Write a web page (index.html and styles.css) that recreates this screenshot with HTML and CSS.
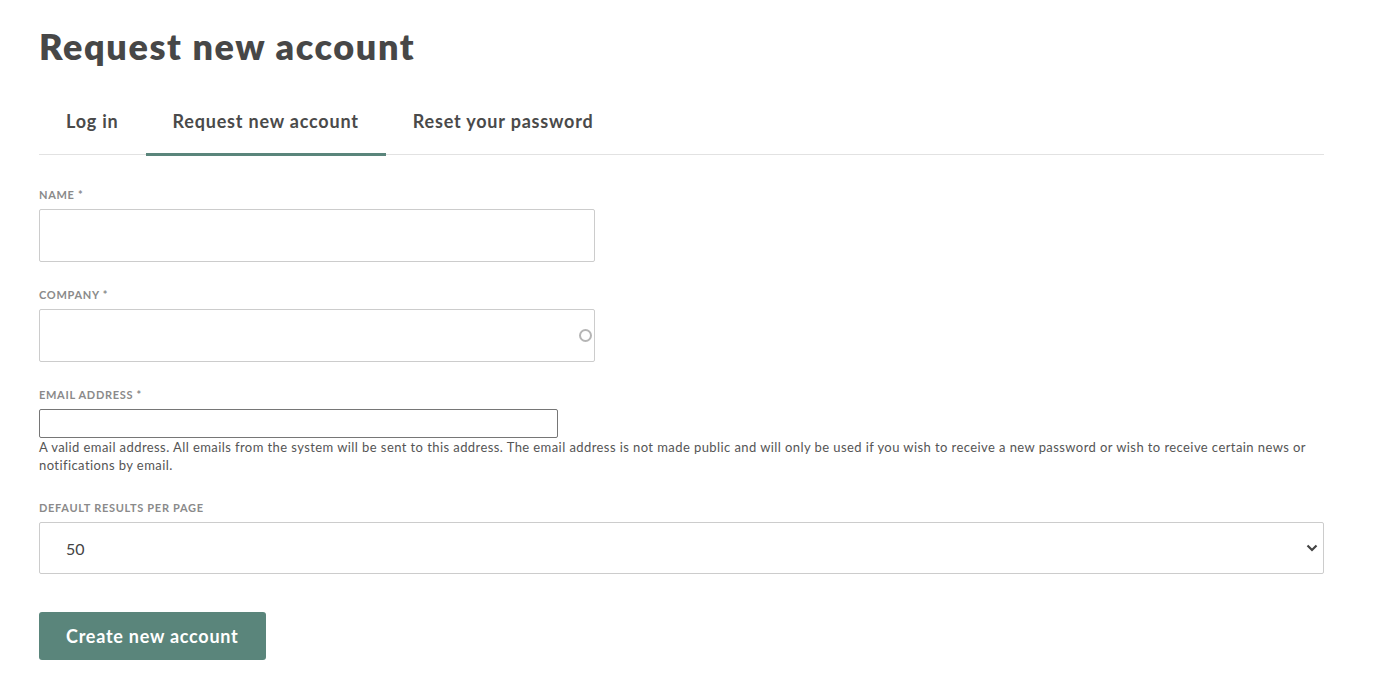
FILE: index.html
```html
<!DOCTYPE html>
<html lang="en">

<head>
  <meta charset="UTF-8" />
  <meta name="viewport" content="width=device-width, initial-scale=1.0" />
  <title>Request new account</title>
  <link rel="stylesheet" href="styles.css">
</head>

<body>
  <main class="page">
    <h1 class="page-title">Request new account</h1>

    <!-- Tabs -->
    <nav class="tabs">
      <a class="tab" href="#">Log in</a>
      <a class="tab is-active" href="#">Request new account</a>
      <a class="tab" href="#">Reset your password</a>
    </nav>

    <form class="register-form">
      <div class="form-item">
        <label for="name">Name *</label>
        <input type="text" id="name" class="text-input" />
      </div>

      <div class="form-item">
        <label for="company">Company *</label>
        <div class="autocomplete">
          <input type="text" id="company" class="text-input" />
          <span class="throbber"></span>
        </div>
      </div>

      <div class="form-item form-item-mail">
        <label for="mail">Email address *</label>
        <input type="email" id="mail" class="email-input" />
        <div class="description">A valid email address. All emails from the system will be sent to this address. The email address is not made public and will only be used if you wish to receive a new password or wish to receive certain news or notifications by email.</div>
      </div>

      <div class="form-item">
        <label for="per-page">Default results per page</label>
        <div class="select-wrap">
          <select id="per-page" class="select-input">
            <option>10</option>
            <option>25</option>
            <option selected>50</option>
            <option>100</option>
          </select>
          <svg class="chevron" width="12" height="8" viewBox="0 0 12 8"><path d="M1.5 1.5 6 6l4.5-4.5" fill="none" stroke="#444" stroke-width="2.2"/></svg>
        </div>
      </div>

      <button type="submit" class="btn-submit">Create new account</button>
    </form>
  </main>
</body>

</html>
```

FILE: styles.css
```css
body {
  font-family: 'Lato', 'Noto Sans', sans-serif;
  margin: 0;
  padding: 0;
  color: #4a4a4a;
  background: #fff;
}

.page {
  width: 1285px;
  padding: 24px 0 30px 39px;
}

.page-title {
  margin: 0;
  font-size: 36px;
  font-weight: 800;
  line-height: 44px;
  letter-spacing: 1.6px;
  color: #474747;
}

.tabs {
  display: flex;
  margin-top: 33px;
  border-bottom: 1px solid #e2e2e2;
}

.tab {
  display: block;
  padding: 0 27px;
  height: 55px;
  line-height: 40px;
  font-size: 18px;
  font-weight: 700;
  color: #4a4a4a;
  text-decoration: none;
  letter-spacing: 0.8px;
  border-bottom: 3px solid transparent;
  margin-bottom: -2px;
  box-sizing: border-box;
}

.tab.is-active {
  border-bottom-color: #5a857b;
}

.register-form {
  padding-top: 32px;
}

.form-item {
  margin-bottom: 25px;
}

label {
  display: block;
  font-size: 11px;
  font-weight: 700;
  text-transform: uppercase;
  color: #8a8a8a;
  letter-spacing: 0.7px;
  line-height: 16px;
  margin-bottom: 6px;
}

.text-input {
  display: block;
  width: 556px;
  height: 53px;
  box-sizing: border-box;
  border: 1px solid #cccccc;
  border-radius: 2px;
  padding: 0 26px;
  font: inherit;
  font-size: 16px;
}

.autocomplete {
  position: relative;
  width: 556px;
}

.throbber {
  position: absolute;
  right: 3px;
  top: 20px;
  width: 9px;
  height: 9px;
  border: 2px solid #b5b5b5;
  border-radius: 50%;
}

.email-input {
  display: block;
  width: 519px;
  height: 29px;
  box-sizing: border-box;
  border: 1px solid #767676;
  border-radius: 2px;
  padding: 1px 2px;
  font: inherit;
}

.form-item-mail {
  margin-bottom: 26px;
}

.description {
  font-size: 13px;
  line-height: 18px;
  letter-spacing: 0.42px;
  color: #555;
}

.select-wrap {
  position: relative;
}

.select-input {
  display: block;
  width: 100%;
  height: 52px;
  appearance: none;
  -webkit-appearance: none;
  background: #fff;
  border: 1px solid #cccccc;
  border-radius: 2px;
  padding: 0 26px;
  font: inherit;
  font-size: 16px;
  color: #444;
}

.chevron {
  position: absolute;
  right: 6px;
  top: 22px;
  pointer-events: none;
}

.btn-submit {
  margin-top: 13px;
  height: 48px;
  padding: 0 27px;
  background-color: #5a857b;
  color: white;
  border: none;
  border-radius: 3px;
  font: inherit;
  font-size: 18px;
  font-weight: 700;
  letter-spacing: 0.75px;
  cursor: pointer;
}
```
